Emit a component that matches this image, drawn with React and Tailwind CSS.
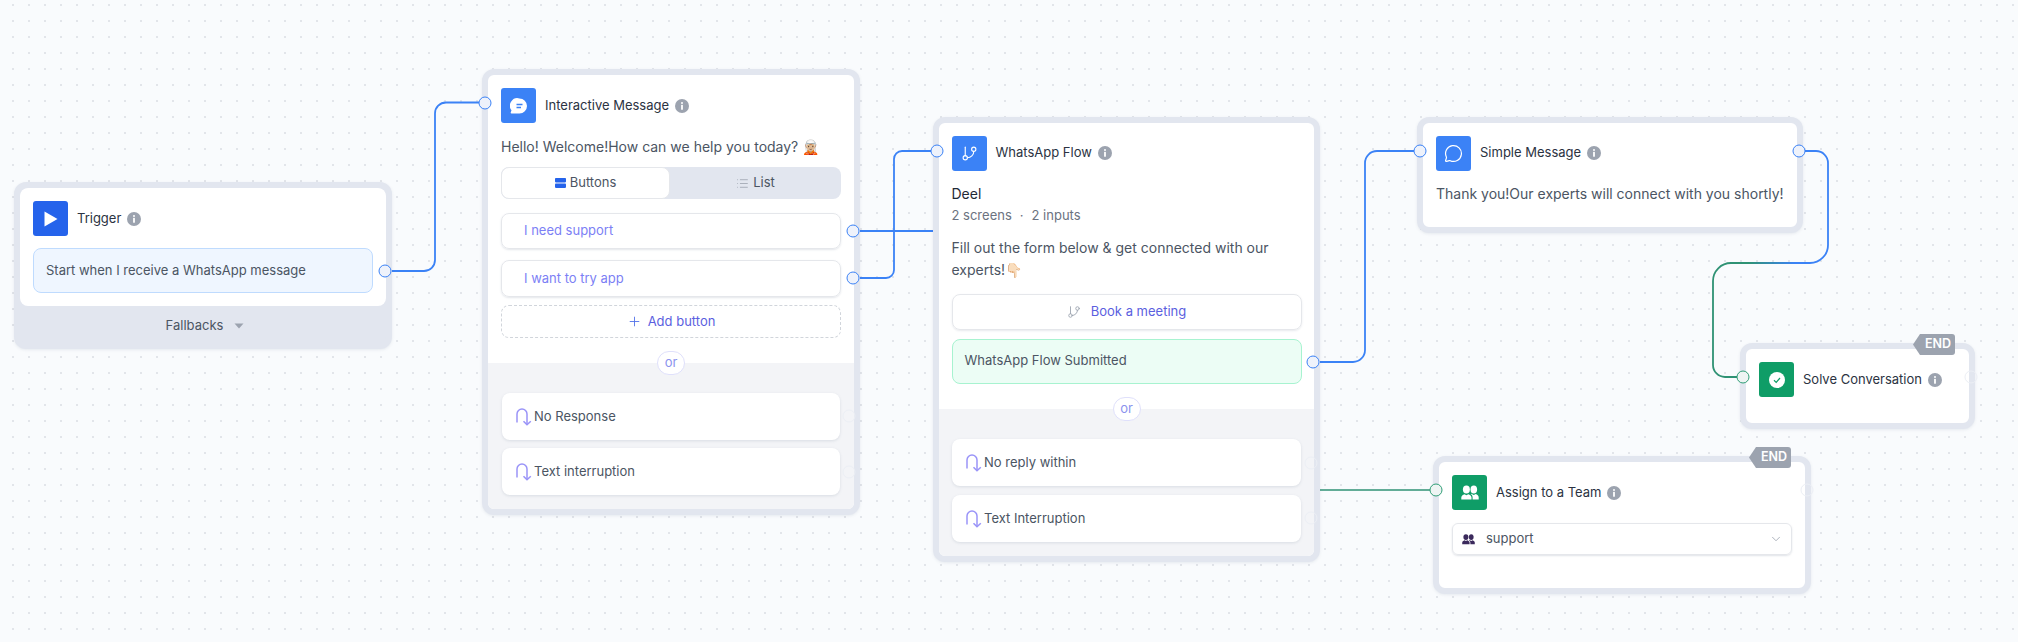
import { ChevronDown, GitBranch, List, MessageCircle, Plus } from 'lucide-react';

function Info({ className = '' }) {
  return (
    <svg width="14" height="14" viewBox="0 0 14 14" className={`shrink-0 ${className}`}>
      <circle cx="7" cy="7" r="7" fill="#9ca3af" />
      <circle cx="7" cy="3.9" r="1" fill="#fff" />
      <rect x="6.1" y="5.8" width="1.8" height="5" rx="0.6" fill="#fff" />
    </svg>
  );
}

function HookIcon() {
  return (
    <svg width="16" height="18" viewBox="0 0 16 18" fill="none" stroke="#9a94f8" strokeWidth="1.5" className="shrink-0">
      <path d="M1 14.5V6a5 5 0 0 1 10 0V16.5" />
      <path d="M7.5 13.2 11 16.8 14.8 13.2" />
    </svg>
  );
}

function TeamIcon({ size = 18, color = '#fff' }) {
  return (
    <svg width={size} height={size} viewBox="0 0 18 18" fill={color}>
      <ellipse cx="5.4" cy="5.6" rx="3.5" ry="4" />
      <ellipse cx="12.8" cy="5.6" rx="3.3" ry="4" />
      <path d="M0.3 15.5v-2c0-1.7 1.5-2.6 3.2-3.3l1.9 1 1.9-1c1.8.7 3.2 1.6 3.2 3.3v2z" />
      <path d="M11.6 15.5v-2c0-1.6-.9-2.7-2-3.4l.7-.3 2.5 1.2 1.9-1c1.6.7 3 1.6 3 3.3v2.2z" />
    </svg>
  );
}

function Header({ icon, iconBg = 'bg-[#3b82f6]', title }) {
  return (
    <div className="flex items-center">
      <div className={`flex h-[35px] w-[35px] shrink-0 items-center justify-center rounded-[3px] ${iconBg}`}>{icon}</div>
      <span className="ml-[9px] text-[13px] text-[#2b3342]">{title}</span>
      <Info className="ml-[6px]" />
    </div>
  );
}

function FallbackCard({ label }) {
  return (
    <div className="flex h-[47px] items-center gap-[2px] rounded-lg bg-white pl-[14px] text-[13px] text-[#4b5563] shadow-[0_1px_3px_rgba(100,116,139,0.18)]">
      <HookIcon />
      <span>{label}</span>
    </div>
  );
}

function OrPill() {
  return (
    <div className="absolute left-1/2 top-0 flex h-[24px] w-[28px] -translate-x-1/2 -translate-y-1/2 items-center justify-center rounded-full border border-[#dfe0fb] bg-white text-[13px] text-[#8b93ee]">
      or
    </div>
  );
}

function EndBadge({ className }) {
  return (
    <div className={`absolute flex h-[21px] w-[42px] items-center justify-end rounded-[3px] bg-[#9ca3af] pr-1 text-[12.5px] font-semibold text-white [clip-path:polygon(7px_0,100%_0,100%_100%,7px_100%,0_50%)] ${className}`}>
      END
    </div>
  );
}

function Port({ className, green, faint }) {
  const colors = faint
    ? 'border-[#eceff5] bg-transparent'
    : green
      ? 'border-[#2f9e76] bg-[#eef4f3]'
      : 'border-[#3b82f6] bg-[#eef2fb]';
  return <div className={`absolute h-[13px] w-[13px] -translate-x-1/2 -translate-y-1/2 rounded-full border ${colors} ${className}`} />;
}

function Edges() {
  return (
    <svg width="2018" height="642" fill="none" className="absolute left-0 top-0">
      <defs>
        <linearGradient id="blueGreen" gradientUnits="userSpaceOnUse" x1="1830" y1="263" x2="1713" y2="263">
          <stop offset="0" stopColor="#3b82f6" />
          <stop offset="0.3" stopColor="#3b82f6" />
          <stop offset="0.7" stopColor="#2f9274" />
          <stop offset="1" stopColor="#2f9274" />
        </linearGradient>
      </defs>
      <g stroke="#3b82f6" strokeWidth="1.8">
        <path d="M392 271H424a11 11 0 0 0 11-11V113.5a11 11 0 0 1 11-11H479" />
        <path d="M860 231H933" />
        <path d="M860 278H886a8 8 0 0 0 8-8V159a8 8 0 0 1 8-8H931" />
        <path d="M1320 362H1353a12 12 0 0 0 12-12V163a12 12 0 0 1 12-12H1414" />
      </g>
      <path d="M1805 151H1816a12 12 0 0 1 12 12V245a18 18 0 0 1-18 18H1731a18 18 0 0 0-18 18V365a12 12 0 0 0 12 12H1737" stroke="url(#blueGreen)" strokeWidth="1.8" />
      <path d="M1320 490H1430" stroke="#2f9274" strokeWidth="1.4" />
    </svg>
  );
}

const nodeBox = 'absolute rounded-xl border-[6.5px] border-[#e2e6ef] overflow-hidden shadow-[0_1px_3px_rgba(100,116,139,0.12)]';

export default function App() {
  return (
    <div className="relative h-[642px] w-[2018px] overflow-hidden bg-[#f9fbfd] bg-[radial-gradient(circle,#e2e5ea_0.8px,transparent_1px)] bg-[length:16px_16px] bg-[position:5px_-3px] font-['Inter','Liberation_Sans',sans-serif]">
      <Edges />

      {/* trigger */}
      <div className={`${nodeBox} left-[14px] top-[182px] h-[167px] w-[378px] bg-[#e2e6ef]`}>
        <div className="h-[118px] rounded-lg bg-white px-[13px] pt-[13px]">
          <Header
            iconBg="bg-[#2563eb]"
            title="Trigger"
            icon={<svg width="14" height="16" viewBox="0 0 14 16"><path d="M0.5 0.5 13.5 8 0.5 15.5z" fill="#fff" /></svg>}
          />
          <div className="mt-[12px] flex h-[45px] items-center rounded-lg border border-[#bfdbfe] bg-[#eff6ff] pl-[12px] text-[13px] text-[#4b5563]">
            Start when I receive a WhatsApp message
          </div>
        </div>
        <div className="flex h-[36px] items-center justify-center gap-[11px] pl-[4px] pt-[3px] text-[13px] text-[#4b5563]">
          <span>Fallbacks</span>
          <svg width="10" height="6" viewBox="0 0 10 6"><path d="M0.5 0.5h9L5 5.5z" fill="#9ca3af" /></svg>
        </div>
      </div>

      {/* interactive message */}
      <div className={`${nodeBox} left-[482px] top-[69px] flex h-[446px] w-[378px] flex-col bg-white`}>
        <div className="h-[288px] px-[13px] pt-[13px]">
          <Header
            title="Interactive Message"
            icon={
              <svg width="18" height="18" viewBox="0 0 18 18">
                <path d="M9.5 1.5a7.5 7.5 0 0 1 0 15H1.5c-.6 0-1-.5-.8-1l.8-2.2A7.5 7.5 0 0 1 9.5 1.5z" fill="#fff" />
                <path d="M6.5 7.5h6M6.5 10.5h4.5" stroke="#3b82f6" strokeWidth="1.3" />
              </svg>
            }
          />
          <p className="mt-[14px] h-[20px] text-[14px] leading-[20px] text-[#4b5563]">Hello! Welcome!How can we help you today? 🧝🏼</p>
          <div className="mt-[10px] flex h-[32px] rounded-lg bg-[#e2e6ef] text-[13px] text-[#4b5563]">
            <div className="flex w-[169px] items-center justify-center gap-[4px] rounded-lg border border-[#e5e7eb] bg-white">
              <svg width="11" height="10" viewBox="0 0 11 10" fill="#2563eb"><rect width="11" height="4.4" rx="0.8" /><rect y="5.5" width="11" height="4.4" rx="0.8" /></svg>
              Buttons
            </div>
            <div className="flex flex-1 items-center justify-center gap-[4px]">
              <List size={13} color="#9ca3af" strokeWidth={1.5} />
              List
            </div>
          </div>
          <div className="mt-[14px] flex h-[36px] items-center rounded-lg border border-[#e5e7eb] pl-[22px] text-[13px] text-[#7c7ff5] shadow-[0_1px_2px_rgba(100,116,139,0.18)]">I need support</div>
          <div className="mt-[11px] flex h-[37px] items-center rounded-lg border border-[#e5e7eb] pl-[22px] text-[13px] text-[#7c7ff5] shadow-[0_1px_2px_rgba(100,116,139,0.18)]">I want to try app</div>
          <div className="mt-[8px] flex h-[33px] items-center justify-center gap-[6px] rounded-lg border border-dashed border-[#d1d5db] text-[13px] text-[#5b5fe0]">
            <Plus size={15} color="#4f6fe8" strokeWidth={1.4} />
            Add button
          </div>
        </div>
        <div className="relative flex flex-1 flex-col gap-[8px] bg-[#f3f4f7] px-[14px] pt-[30px]">
          <OrPill />
          <FallbackCard label="No Response" />
          <FallbackCard label="Text interruption" />
        </div>
      </div>

      {/* whatsapp flow */}
      <div className={`${nodeBox} left-[933px] top-[117px] flex h-[445px] w-[387px] flex-col bg-white`}>
        <div className="h-[286px] px-[12.5px] pt-[12.5px]">
          <Header title="WhatsApp Flow" icon={<GitBranch size={17} color="#fff" strokeWidth={1.6} />} />
          <p className="mt-[13px] text-[14px] leading-[20px] text-[#1f2937]">Deel</p>
          <p className="mt-[1px] flex gap-[8px] text-[13px] leading-[20px] text-[#6b7280]">
            <span>2 screens</span><span>·</span><span>2 inputs</span>
          </p>
          <p className="mt-[12px] text-[14px] leading-[22px] text-[#4b5563]">Fill out the form below & get connected with our experts!👇🏻</p>
          <div className="mt-[13px] flex h-[36px] items-center justify-center gap-[10px] rounded-lg border border-[#e5e7eb] text-[13px] text-[#5b5fe0] shadow-[0_1px_2px_rgba(100,116,139,0.15)]">
            <GitBranch size={14} color="#9ca3af" strokeWidth={1.5} />
            Book a meeting
          </div>
          <div className="mt-[9px] flex h-[45px] items-center rounded-lg border border-[#a7f3d0] bg-[#ecfdf5] pl-[12px] text-[13px] text-[#4b5563]">WhatsApp Flow Submitted</div>
        </div>
        <div className="relative flex flex-1 flex-col gap-[9px] bg-[#f3f4f7] px-[13px] pt-[30px]">
          <OrPill />
          <FallbackCard label="No reply within" />
          <FallbackCard label="Text Interruption" />
        </div>
      </div>

      {/* simple message */}
      <div className={`${nodeBox} left-[1417px] top-[117px] h-[116px] w-[386px] bg-white px-[13px] pt-[12.5px]`}>
        <Header title="Simple Message" icon={<MessageCircle size={19} color="#fff" strokeWidth={1.5} />} />
        <p className="mt-[13px] text-[14px] leading-[20px] text-[#4b5563]">Thank you!Our experts will connect with you shortly!</p>
      </div>

      {/* solve conversation */}
      <div className={`${nodeBox} left-[1740px] top-[343px] h-[86px] w-[235px] bg-white px-[13px] pt-[13px]`}>
        <Header
          iconBg="bg-[#0f9d67]"
          title="Solve Conversation"
          icon={
            <svg width="16" height="16" viewBox="0 0 16 16">
              <circle cx="8" cy="8" r="8" fill="#fff" />
              <path d="M5 8.3 7.2 10.4 11 6" fill="none" stroke="#0f9d67" strokeWidth="1.2" />
            </svg>
          }
        />
      </div>
      <EndBadge className="left-[1913px] top-[334px]" />

      {/* assign to team */}
      <div className={`${nodeBox} left-[1433px] top-[456px] h-[138px] w-[378px] bg-white px-[13px] pt-[13px]`}>
        <Header iconBg="bg-[#0f9d67]" title="Assign to a Team" icon={<TeamIcon />} />
        <div className="mt-[13px] flex h-[32px] items-center rounded-md border border-[#e5e7eb] pl-[9px] pr-[8px] text-[13px] text-[#4b5563] shadow-[0_1px_2px_rgba(100,116,139,0.2)]">
          <TeamIcon size={13} color="#3b2a5c" />
          <span className="ml-[11px] flex-1">support</span>
          <ChevronDown size={14} color="#9ca3af" strokeWidth={1.4} />
        </div>
      </div>
      <EndBadge className="left-[1749px] top-[447px]" />

      <Port className="left-[385px] top-[271px]" />
      <Port className="left-[485px] top-[102.5px]" />
      <Port className="left-[853px] top-[231px]" />
      <Port className="left-[853px] top-[278px]" />
      <Port className="left-[937px] top-[151px]" />
      <Port className="left-[1313px] top-[362px]" />
      <Port className="left-[1420px] top-[151px]" />
      <Port className="left-[1799px] top-[151px]" />
      <Port green className="left-[1743px] top-[377px]" />
      <Port green className="left-[1436px] top-[490px]" />
      <Port faint className="left-[1971px] top-[377px]" />
      <Port faint className="left-[1807px] top-[490px]" />
      <Port faint className="left-[849px] top-[416px]" />
      <Port faint className="left-[849px] top-[472px]" />
      <Port faint className="left-[1311px] top-[463px]" />
      <Port faint className="left-[1311px] top-[518px]" />
    </div>
  );
}
